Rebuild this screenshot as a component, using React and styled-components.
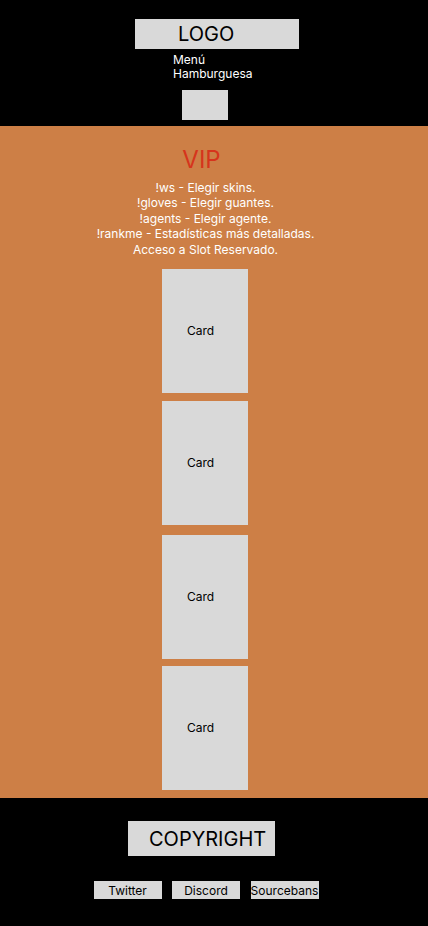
import React from 'react';
import styled, { createGlobalStyle } from 'styled-components';

const GlobalStyle = createGlobalStyle`
	html, body {
		margin: 0;
		padding: 0;
		background: #000;
	}

	body {
		font-family: Inter, "Noto Sans", sans-serif;
	}
`;

const Page = styled.div`
	width: 428px;
	min-height: 926px;
	display: flex;
	flex-direction: column;
`;

const Header = styled.header`
	height: 126px;
	box-sizing: border-box;
	background: #000;
	padding-top: 19px;
	display: flex;
	flex-direction: column;
	align-items: center;
`;

const LogoBox = styled.div`
	width: 164px;
	height: 30px;
	margin-left: 6px;
	box-sizing: border-box;
	padding-left: 43px;
	background: #d9d9d9;
	color: #000;
	font-size: 20px;
	display: flex;
	align-items: center;
`;

const MenuText = styled.div`
	width: 80px;
	margin-top: 3.5px;
	margin-right: 2px;
	color: #fff;
	font-size: 12px;
	line-height: 14px;
`;

const MenuButton = styled.div`
	width: 46px;
	height: 30px;
	margin-top: 9.5px;
	margin-right: 18px;
	background: #d9d9d9;
`;

const Main = styled.main`
	height: 672px;
	box-sizing: border-box;
	background: #cd7f46;
	padding-top: 19px;
	display: flex;
	flex-direction: column;
	align-items: center;
`;

const Title = styled.h1`
	margin: 0 25px 0 0;
	font-size: 24px;
	font-weight: 400;
	line-height: 29px;
	color: #d6341c;
`;

const Perks = styled.ul`
	list-style: none;
	margin: 5.5px 17px 0 0;
	padding: 0;
	text-align: center;
	color: #fff;
	font-size: 12px;
	line-height: 15.6px;
`;

const CardList = styled.div`
	margin: 11.5px 18px 0 0;
	display: flex;
	flex-direction: column;
`;

const Card = styled.div`
	width: 86px;
	height: 124px;
	margin-top: ${(p) => p.$gap}px;
	box-sizing: border-box;
	padding-left: 25px;
	background: #d9d9d9;
	color: #000;
	font-size: 12px;
	display: flex;
	align-items: center;
`;

const Footer = styled.footer`
	flex: 1;
	background: #000;
	padding-top: 23px;
	display: flex;
	flex-direction: column;
	align-items: center;
`;

const Copyright = styled.div`
	width: 147px;
	height: 35px;
	margin-right: 25px;
	box-sizing: border-box;
	padding-left: 21px;
	background: #d9d9d9;
	color: #000;
	font-size: 20px;
	display: flex;
	align-items: center;
`;

const Links = styled.nav`
	margin: 25px 16px 0 0;
	display: flex;
	gap: 10.5px;
`;

const LinkBox = styled.a`
	width: 68px;
	height: 18px;
	background: #d9d9d9;
	color: #000;
	font-size: 12px;
	text-decoration: none;
	display: flex;
	align-items: center;
	justify-content: center;
	white-space: nowrap;
`;

const perks = [
	'!ws - Elegir skins.',
	'!gloves - Elegir guantes.',
	'!agents - Elegir agente.',
	'!rankme - Estadísticas más detalladas.',
	'Acceso a Slot Reservado.',
];

const cards = [0, 8, 10, 7];

export default function App() {
	return (
		<Page>
			<GlobalStyle />
			<Header>
				<LogoBox>LOGO</LogoBox>
				<MenuText>
					Menú
					<br />
					Hamburguesa
				</MenuText>
				<MenuButton />
			</Header>

			<Main>
				<Title>VIP</Title>
				<Perks>
					{perks.map((p) => (
						<li key={p}>{p}</li>
					))}
				</Perks>
				<CardList>
					{cards.map((gap, i) => (
						<Card key={i} $gap={gap}>
							Card
						</Card>
					))}
				</CardList>
			</Main>

			<Footer>
				<Copyright>COPYRIGHT</Copyright>
				<Links>
					<LinkBox href="#">Twitter</LinkBox>
					<LinkBox href="#">Discord</LinkBox>
					<LinkBox href="#">Sourcebans</LinkBox>
				</Links>
			</Footer>
		</Page>
	);
}
